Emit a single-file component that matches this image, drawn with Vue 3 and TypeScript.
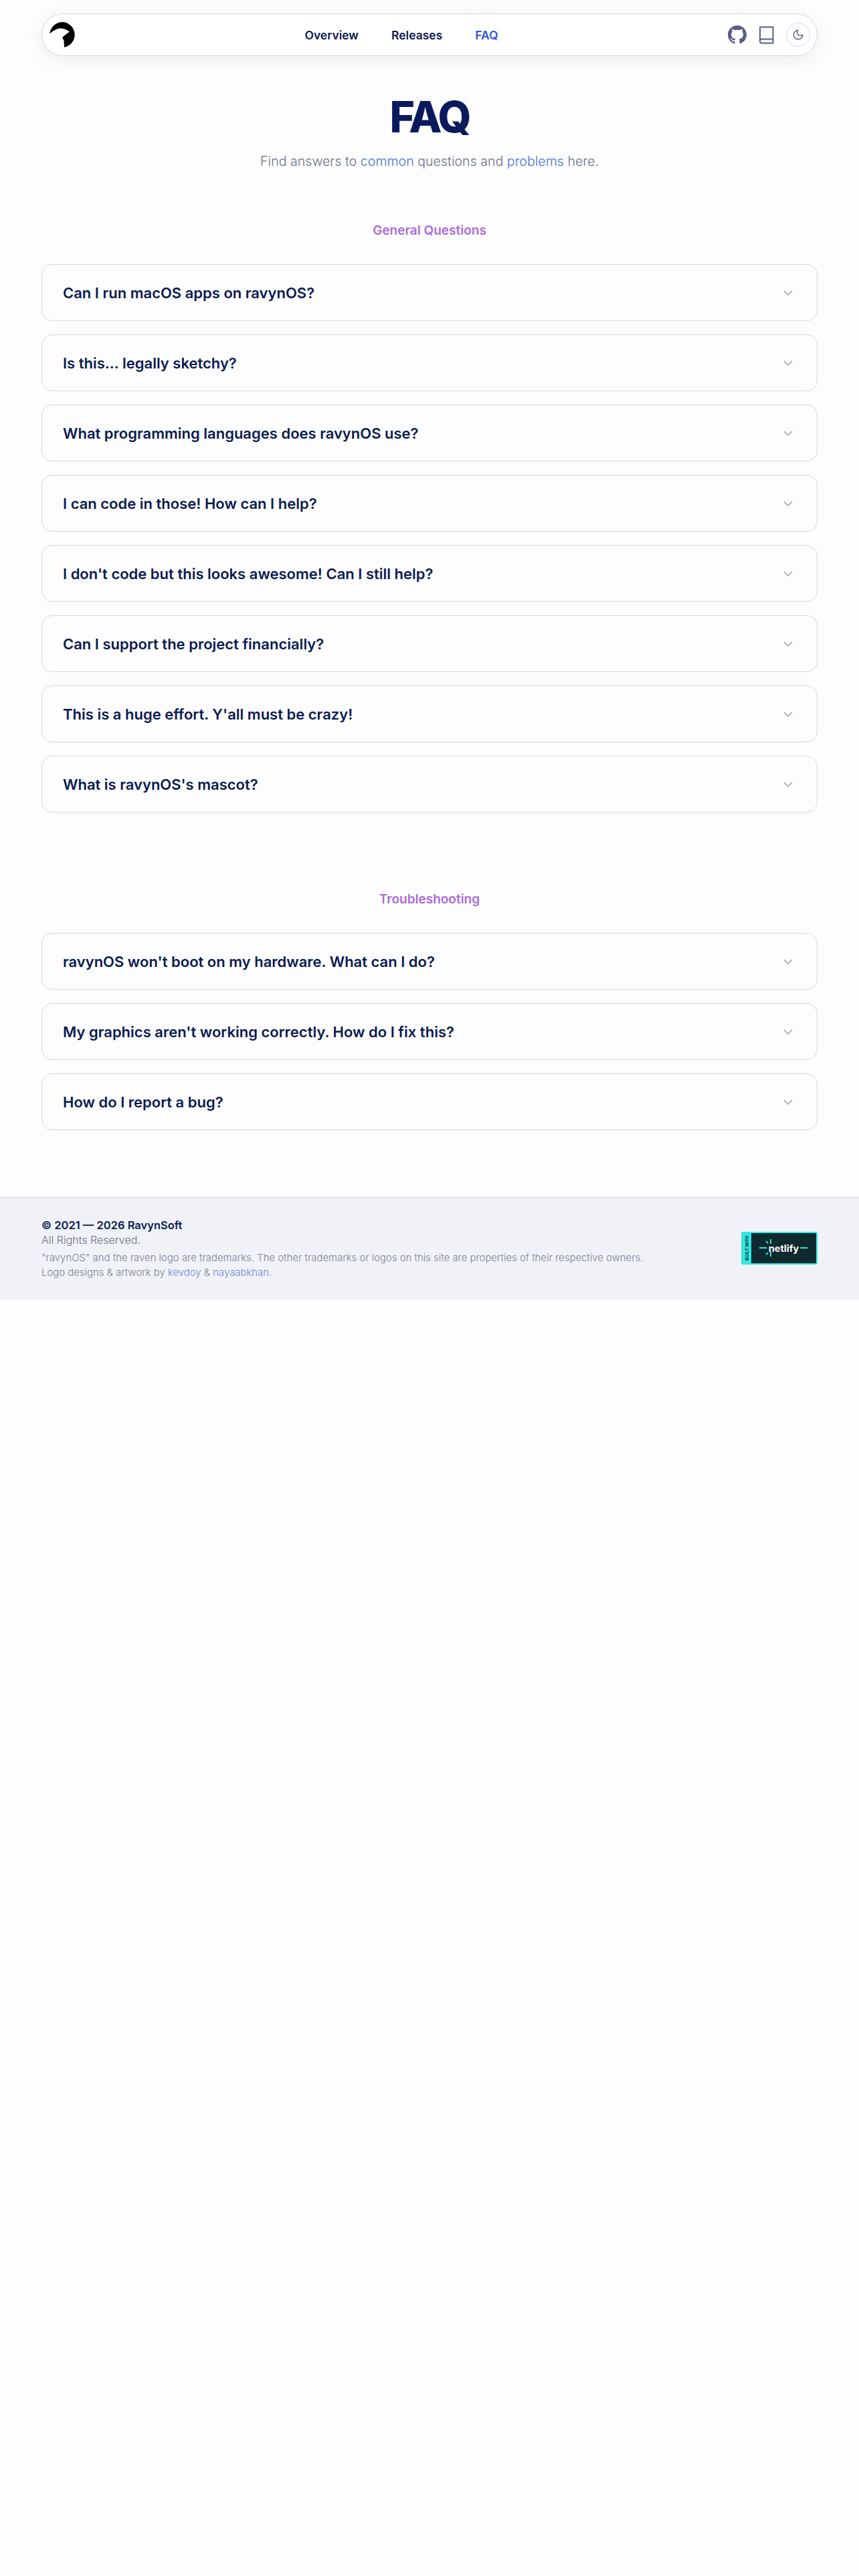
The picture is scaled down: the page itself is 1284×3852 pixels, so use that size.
<script setup lang="ts">
const general: string[] = [
  'Can I run macOS apps on ravynOS?',
  'Is this... legally sketchy?',
  'What programming languages does ravynOS use?',
  'I can code in those! How can I help?',
  "I don't code but this looks awesome! Can I still help?",
  'Can I support the project financially?',
  "This is a huge effort. Y'all must be crazy!",
  "What is ravynOS's mascot?",
]
const trouble: string[] = [
  "ravynOS won't boot on my hardware. What can I do?",
  "My graphics aren't working correctly. How do I fix this?",
  'How do I report a bug?',
]
const sections = [
  { title: 'General Questions', items: general },
  { title: 'Troubleshooting', items: trouble },
]
</script>

<template>
  <div class="page">
    <header class="nav">
      <a class="logo" href="#">
        <svg viewBox="0 0 38 38" width="38" height="38">
          <path d="M0 17.3C2 7 10 0 19 0a19 19 0 0 1 3 37.7L21.5 27.5 19 23c3-2.500 7-6 11-8.500C24 10 16 8 10 11c-4 2-7 4-10 6.300Z" fill="#000" />
        </svg>
      </a>
      <nav class="links">
        <a href="#">Overview</a>
        <a href="#">Releases</a>
        <a href="#" class="active">FAQ</a>
      </nav>
      <div class="actions">
        <svg class="gh" viewBox="0 0 16 16" width="28" height="28">
          <path fill="#565f89" d="M8 0C3.580 0 0 3.580 0 8c0 3.540 2.290 6.530 5.470 7.590.4.070.55-.17.55-.38 0-.19-.01-.82-.01-1.490-2.010.37-2.530-.49-2.690-.94-.09-.23-.48-.94-.82-1.130-.28-.15-.68-.52-.01-.53.63-.01 1.080.58 1.230.82.72 1.210 1.870.87 2.330.66.07-.52.28-.87.510-1.070-1.780-.2-3.640-.89-3.640-3.950 0-.87.310-1.590.820-2.150-.08-.2-.36-1.020.08-2.120 0 0 .67-.21 2.200.82.64-.18 1.320-.27 2-.27s1.360.09 2 .27c1.530-1.040 2.200-.82 2.200-.82.44 1.100.16 1.920.08 2.120.51.56.82 1.270.82 2.150 0 3.070-1.870 3.750-3.650 3.950.29.25.54.73.54 1.480 0 1.070-.01 1.930-.01 2.200 0 .21.15.46.55.38A8.010 8.010 0 0 0 16 8c0-4.420-3.580-8-8-8Z" />
        </svg>
        <svg class="book" viewBox="0 0 22 27" width="22" height="27" fill="none" stroke="#565f89" stroke-width="2" stroke-linejoin="round">
          <path d="M2 1.500h18.500v24H3.500A2.500 2.500 0 0 1 1 23V2.500a1 1 0 0 1 1-1Z" />
          <path d="M1 22a2.500 2.500 0 0 1 2.500-2.500h17" />
        </svg>
        <button class="theme" type="button" aria-label="Toggle theme">
          <svg viewBox="0 0 24 24" width="18" height="18" fill="none" stroke="#565f89" stroke-width="1.800" stroke-linecap="round" stroke-linejoin="round">
            <path d="M12 3a6 6 0 0 0 9 9 9 9 0 1 1-9-9Z" />
          </svg>
        </button>
      </div>
    </header>

    <main class="main">
      <div class="hero">
        <h1>FAQ</h1>
        <p>Find answers to <a href="#">common</a> questions and <a href="#">problems</a> here.</p>
      </div>

      <section v-for="s in sections" :key="s.title" class="section">
        <h2>{{ s.title }}</h2>
        <div class="list">
          <div v-for="q in s.items" :key="q" class="card">
            <span>{{ q }}</span>
            <svg viewBox="0 0 14 8" width="14" height="8" fill="none" stroke="#b6b6bc" stroke-width="2">
              <path d="M1 1l6 6 6-6" />
            </svg>
          </div>
        </div>
      </section>
    </main>

    <footer class="footer">
      <div class="foot-text">
        <div class="copy">© 2021 — 2026 RavynSoft</div>
        <div class="rights">All Rights Reserved.</div>
        <div class="legal">"ravynOS" and the raven logo are trademarks. The other trademarks or logos on this site are properties of their respective owners.</div>
        <div class="legal">Logo designs &amp; artwork by <a href="#">kevdoy</a> &amp; <a href="#">nayaabkhan</a>.</div>
      </div>
      <div class="badge">
        <span class="built">BUILT WITH</span>
        <span class="nf">
          <svg viewBox="0 0 72 32" width="72" height="32" fill="none" stroke="#30e6e2" stroke-width="2">
            <path d="M0 16h11M61 16h11" />
            <path d="M17 3v7M17 22v7M10 6l3 3M13 23l-3 3" />
          </svg>
          <b>netlify</b>
        </span>
      </div>
    </footer>
  </div>
</template>

<style>
html, body {
  margin: 0;
  background: #fdfdfd;
}
</style>

<style scoped>
.page {
  font-family: "Inter", "Liberation Sans", sans-serif;
  color: #0a1a52;
  padding-top: 20px;
}
a { text-decoration: none; color: inherit; }
.nav {
  margin: 0 62px;
  height: 64px;
  box-sizing: border-box;
  border: 1px solid #d6d6dc;
  border-radius: 32px;
  background: #fff;
  box-shadow: 0 6px 24px rgba(60, 70, 120, 0.08);
  display: flex;
  align-items: center;
  justify-content: space-between;
  padding: 0 10px 0 11px;
}
.logo { display: flex; width: 38px; height: 38px; }
.links { display: flex; gap: 49px; font-size: 17.5px; font-weight: 600; }
.links .active { color: #2f55d4; }
.actions { display: flex; align-items: center; }
.gh { margin-right: 19px; }
.book { margin-right: 18px; }
.theme {
  width: 36px;
  height: 36px;
  border-radius: 50%;
  border: 1px solid #d6d6dc;
  background: #fff;
  display: flex;
  align-items: center;
  justify-content: center;
  padding: 0;
}
.main { margin: 0 62px; }
.hero { text-align: center; padding-top: 52px; }
.hero h1 {
  margin: 0;
  font-size: 64px;
  line-height: 78px;
  font-weight: 800;
  color: #0a1a5c;
  letter-spacing: -3px;
}
.hero p {
  margin: 11px 0 0;
  font-size: 19.6px;
  line-height: 32px;
  font-weight: 300;
  color: #6c7087;
}
.hero p a { color: #4a72cf; }
.section h2 {
  margin: 0;
  text-align: center;
  font-size: 19px;
  line-height: 28px;
  font-weight: 600;
  color: #ab6bdc;
}
.section { margin-top: 116px; }
.hero + .section { margin-top: 74px; }
.list { display: flex; flex-direction: column; gap: 20px; margin-top: 36px; }
.card {
  height: 85px;
  box-sizing: border-box;
  border: 1px solid #d8d8dd;
  border-radius: 16px;
  padding: 0 36px 0 31px;
  display: flex;
  align-items: center;
  justify-content: space-between;
  font-size: 22px;
  font-weight: 600;
  color: #0a1a52;
}
.footer {
  margin-top: 100px;
  height: 153px;
  box-sizing: border-box;
  border-top: 1px solid #d6d6dc;
  background: #f0f2f7;
  padding: 30px 62px 0;
  display: flex;
  justify-content: space-between;
}
.copy { font-size: 16.5px; line-height: 22px; font-weight: 600; color: #0a1a52; }
.rights { font-size: 16px; line-height: 22px; font-weight: 300; color: #6c7087; margin-bottom: 5px; }
.legal { font-size: 14.9px; line-height: 22px; font-weight: 300; color: #7d8196; }
.legal a { color: #6f88d4; }
.badge {
  align-self: flex-start;
  margin-top: 21px;
  width: 114px;
  height: 49px;
  box-sizing: border-box;
  display: flex;
  border: 2px solid #30e6e2;
  border-radius: 3px;
  background: #0e2a2e;
}
.built {
  width: 13px;
  background: #30e6e2;
  color: #0e2a2e;
  writing-mode: vertical-rl;
  transform: rotate(180deg);
  font-size: 6.5px;
  font-weight: 700;
  text-align: center;
  line-height: 13px;
  white-space: nowrap;
  font-family: "Liberation Sans", sans-serif;
}
.nf {
  flex: 1;
  position: relative;
  display: flex;
  align-items: center;
  justify-content: center;
}
.nf svg { position: absolute; left: 12px; top: 6px; }
.nf b {
  position: relative;
  color: #fff;
  font-size: 14.5px;
  font-weight: 700;
}
</style>
